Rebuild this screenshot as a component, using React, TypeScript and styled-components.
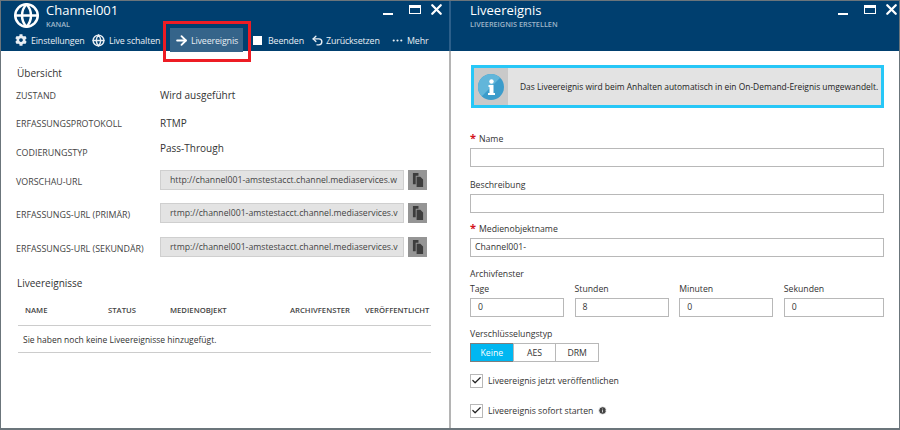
import React from "react";
import styled, { createGlobalStyle } from "styled-components";
import { Globe, ArrowRight, Undo2, MoreHorizontal, X, Check, Info } from "lucide-react";
import { FaCog } from "react-icons/fa";

const Global = createGlobalStyle`
  html, body { margin: 0; padding: 0; background: #fff; }
  body { font-family: "Open Sans", "Liberation Sans", sans-serif; color: #333; }
  * { box-sizing: border-box; }
`;

const Page = styled.div`
  width: 900px;
  height: 430px;
  display: grid;
  grid-template-columns: 450px 448px;
  overflow: hidden;
  position: relative;
  border: 1px solid #6b757b;
  border-bottom-width: 2px;
`;

const Blade = styled.section<{ $left?: boolean }>`
  border-right: ${({ $left }) => ($left ? "2px solid #b4b4b4" : "none")};
  display: flex;
  flex-direction: column;
  min-width: 0;
`;

const Header = styled.header<{ $left?: boolean }>`
  height: 50px;
  background: #003f6f;
  color: #fff;
  position: relative;
  flex: none;
  margin-right: ${({ $left }) => ($left ? "-2px" : "0")};
  border-right: ${({ $left }) => ($left ? "2px solid #2c5f8a" : "none")};
`;

const TitleRow = styled.div<{ $indent: number }>`
  display: flex;
  align-items: flex-start;
  padding: 1px 0 0 ${({ $indent }) => $indent}px;
  height: 26px;
`;

const TitleBlock = styled.div`
  display: flex;
  flex-direction: column;
`;

const Title = styled.div`
  font-size: 13px;
  line-height: 16px;
  color: #fff;
`;

const Subtitle = styled.div`
  font-size: 7.3px;
  line-height: 9px;
  font-weight: 600;
  color: #9fb6c9;
  margin-top: 2px;
`;

const Logo = styled.div`
  position: absolute;
  left: 12px;
  top: 1px;
  color: #fff;
`;

const WindowButtons = styled.div<{ $right: number }>`
  position: absolute;
  top: 0;
  right: ${({ $right }) => $right}px;
  height: 16px;
  display: flex;
  align-items: center;
  color: #fff;
`;

const MinBar = styled.span`
  display: block;
  width: 10px;
  height: 2px;
  background: #fff;
  margin: 9px 16px 0 0;
`;

const MaxBox = styled.span`
  display: block;
  width: 12px;
  height: 9px;
  border: 1.5px solid #fff;
  border-top-width: 3px;
  margin-right: 10px;
`;

const Toolbar = styled.nav`
  display: flex;
  align-items: center;
  height: 24px;
  margin-top: 1px;
  padding-left: 14px;
`;

const Tool = styled.div<{ $active?: boolean; $w: number; $pad?: number; $gap?: number }>`
  display: flex;
  align-items: center;
  gap: ${({ $gap }) => $gap ?? 4}px;
  width: ${({ $w }) => $w}px;
  height: 24px;
  font-size: 8.9px;
  letter-spacing: -0.15px;
  color: #e8eef3;
  white-space: nowrap;
  flex: none;
  padding-left: ${({ $pad }) => $pad ?? 0}px;
  background: ${({ $active }) => ($active ? "#35648a" : "transparent")};
  svg {
    flex: none;
  }
`;

const StopIcon = styled.span`
  display: block;
  width: 9px;
  height: 9px;
  background: #fff;
  margin-right: 2px;
  flex: none;
`;

const RedBox = styled.div`
  position: absolute;
  left: 162px;
  top: 20px;
  width: 88px;
  height: 41px;
  border: 3px solid #ed1c24;
  pointer-events: none;
`;

const LeftBody = styled.div`
  padding: 15px 19px 0 15px;
`;

const SectionTitle = styled.h2<{ $top?: number }>`
  font-size: 10px;
  line-height: 14px;
  font-weight: 400;
  margin: ${({ $top }) => $top ?? 0}px 0 0 1px;
  color: #333;
`;

const PropRow = styled.div<{ $h: number }>`
  display: grid;
  grid-template-columns: 144px 1fr;
  align-items: center;
  height: ${({ $h }) => $h}px;
`;

const PropLabel = styled.div<{ $drop?: number }>`
  font-size: 8.9px;
  padding-top: ${({ $drop }) => $drop ?? 0}px;
  color: #444;
  white-space: nowrap;
`;

const PropValue = styled.div<{ $lift?: number }>`
  font-size: 10px;
  padding-bottom: ${({ $lift }) => $lift ?? 0}px;
  color: #333;
`;

const UrlRow = styled.div`
  display: flex;
  align-items: flex-start;
  gap: 4px;
  align-self: start;
  padding-top: 7px;
`;

const UrlBox = styled.div`
  width: 244px;
  height: 20px;
  background: #e3e3e3;
  border: 1px solid #cfcfcf;
  font-size: 8.7px;
  line-height: 18px;
  padding-left: 9px;
  color: #444;
  white-space: nowrap;
`;

const CopyButton = styled.div`
  width: 19px;
  height: 20px;
  background: #959595;
  display: flex;
  align-items: center;
  justify-content: center;
`;

const Table = styled.div`
  margin-top: 10px;
  width: 413px;
  margin-left: 2px;
`;

const TableHead = styled.div`
  display: flex;
  height: 26px;
  align-items: flex-start;
  padding-top: 4px;
  border-bottom: 1px solid #cccccc;
  font-size: 7.7px;
  line-height: 12px;
  font-weight: 600;
  color: #444;
`;

const HeadCell = styled.div<{ $w: number }>`
  width: ${({ $w }) => $w}px;
  flex: none;
  white-space: nowrap;
`;

const EmptyRow = styled.div`
  height: 27px;
  display: flex;
  align-items: center;
  padding-left: 5px;
  border-bottom: 1px solid #cccccc;
  font-size: 8.5px;
  color: #333;
`;

const RightBody = styled.div`
  padding: 14px 15px 0 19px;
`;

const InfoBanner = styled.div`
  display: flex;
  align-items: stretch;
  height: 43px;
  width: 413px;
  margin-left: 1px;
  border: 3px solid #27c7f7;
  background: #e3e3e3;
`;

const InfoIconCell = styled.div`
  width: 34px;
  background: #c9c9c9;
  display: flex;
  align-items: center;
  justify-content: center;
`;

const InfoText = styled.div`
  display: flex;
  align-items: center;
  padding-left: 12px;
  font-size: 8.41px;
  color: #222;
  white-space: nowrap;
`;

const Field = styled.div<{ $top: number }>`
  margin-top: ${({ $top }) => $top}px;
`;

const Label = styled.label`
  display: block;
  font-size: 8.7px;
  line-height: 12px;
  height: 15px;
  color: #333;
  white-space: nowrap;
`;

const Req = styled.span`
  color: #d3141c;
  font-weight: 700;
  font-size: 11px;
  line-height: 10px;
  margin-right: 3px;
`;

const TextInput = styled.div`
  width: 414px;
  height: 19px;
  border: 1px solid #b8b8b8;
  background: #fff;
  font-size: 8.7px;
  line-height: 17px;
  padding-left: 4px;
  color: #333;
`;

const TimeGrid = styled.div`
  display: grid;
  grid-template-columns: 94px 94px 94px 100px;
  column-gap: 10.6px;
  width: 414px;
`;

const TimeInput = styled(TextInput)`
  width: 100%;
  padding-left: 7px;
`;

const Segments = styled.div`
  display: flex;
  width: 129px;
  height: 19px;
`;

const Segment = styled.div<{ $on?: boolean }>`
  flex: 1;
  margin-left: ${({ $on }) => ($on ? "0" : "-1px")};
  display: flex;
  align-items: center;
  justify-content: center;
  font-size: 8.7px;
  color: ${({ $on }) => ($on ? "#fff" : "#333")};
  background: ${({ $on }) => ($on ? "#00b7f1" : "#fff")};
  border: 1px solid ${({ $on }) => ($on ? "#7d7d7d" : "#b8b8b8")};
`;

const CheckRow = styled.div<{ $top: number }>`
  display: flex;
  align-items: center;
  gap: 5px;
  margin-top: ${({ $top }) => $top}px;
  height: 15px;
  font-size: 8.7px;
  color: #333;
`;

const CheckBox = styled.span`
  width: 13px;
  height: 14px;
  border: 1px solid #b8b8b8;
  display: flex;
  align-items: center;
  justify-content: center;
  color: #222;
  flex: none;
`;

const CopyIcon = () => (
  <svg width="12" height="14" viewBox="0 0 13 15">
    <path d="M1 0h6v3H4v9H1z" fill="#3d3d3d" />
    <path d="M5 4h4l3 3v8H5z" fill="#3d3d3d" />
  </svg>
);

const InfoBall = () => (
  <svg width="26" height="26" viewBox="0 0 26 26">
    <circle cx="13" cy="13" r="13" fill="#3c9ccb" />
    <path d="M13 0a13 13 0 0 0-13 13 13 13 0 0 0 3.8 9.2L22.2 3.8A13 13 0 0 0 13 0z" fill="#62b6da" />
    <circle cx="13.5" cy="7.5" r="2.2" fill="#fff" />
    <path d="M10.5 11h5v8h1.5v2h-7v-2h1.5v-6h-1z" fill="#fff" />
  </svg>
);

const WindowControls: React.FC<{ right: number }> = ({ right }) => (
  <WindowButtons $right={right}>
    <MinBar />
    <MaxBox />
    <X size={17} strokeWidth={3.2} style={{ margin: "0 -3px" }} />
  </WindowButtons>
);

const base = "channel001-amstestacct.channel.mediaservices";
const urls = [
  { label: "VORSCHAU-URL", url: `http://${base}.w`, h: 33 },
  { label: "ERFASSUNGS-URL (PRIMÄR)", url: `rtmp://${base}.v`, h: 34 },
  { label: "ERFASSUNGS-URL (SEKUNDÄR)", url: `rtmp://${base}.v`, h: 33 },
];

const App: React.FC = () => {
  return (
    <Page>
      <Global />
      <Blade $left>
        <Header $left>
          <Logo>
            <Globe size={27} strokeWidth={2.2} />
          </Logo>
          <TitleRow $indent={45}>
            <TitleBlock>
              <Title>Channel001</Title>
              <Subtitle>KANAL</Subtitle>
            </TitleBlock>
          </TitleRow>
          <WindowControls right={7} />
          <Toolbar>
            <Tool $w={77}>
              <FaCog size={12} />
              Einstellungen
            </Tool>
            <Tool $w={78}>
              <Globe size={13} strokeWidth={2.6} />
              Live schalten
            </Tool>
            <Tool $active $w={73} $pad={4} $gap={2}>
              <ArrowRight size={15} strokeWidth={3} color="#fff" />
              Liveereignis
            </Tool>
            <Tool $w={68} $pad={10}>
              <StopIcon />
              Beenden
            </Tool>
            <Tool $w={80} $gap={2}>
              <Undo2 size={13} strokeWidth={2.6} />
              Zurücksetzen
            </Tool>
            <Tool $w={44} $gap={3}>
              <MoreHorizontal size={13} />
              Mehr
            </Tool>
          </Toolbar>
          <RedBox />
        </Header>
        <LeftBody>
          <SectionTitle>Übersicht</SectionTitle>
          <PropRow $h={30}>
            <PropLabel>ZUSTAND</PropLabel>
            <PropValue>Wird ausgeführt</PropValue>
          </PropRow>
          <PropRow $h={26}>
            <PropLabel>ERFASSUNGSPROTOKOLL</PropLabel>
            <PropValue>RTMP</PropValue>
          </PropRow>
          <PropRow $h={27}>
            <PropLabel $drop={6}>CODIERUNGSTYP</PropLabel>
            <PropValue $lift={3}>Pass-Through</PropValue>
          </PropRow>
          {urls.map(({ label, url, h }) => (
            <PropRow $h={h} key={label}>
              <PropLabel $drop={3}>{label}</PropLabel>
              <UrlRow>
                <UrlBox>{url}</UrlBox>
                <CopyButton>
                  <CopyIcon />
                </CopyButton>
              </UrlRow>
            </PropRow>
          ))}
          <SectionTitle $top={13}>Liveereignisse</SectionTitle>
          <Table>
            <TableHead>
              <HeadCell $w={7} />
              <HeadCell $w={83}>NAME</HeadCell>
              <HeadCell $w={62}>STATUS</HeadCell>
              <HeadCell $w={120}>MEDIENOBJEKT</HeadCell>
              <HeadCell $w={75}>ARCHIVFENSTER</HeadCell>
              <HeadCell $w={65}>VERÖFFENTLICHT</HeadCell>
            </TableHead>
            <EmptyRow>Sie haben noch keine Liveereignisse hinzugefügt.</EmptyRow>
          </Table>
        </LeftBody>
      </Blade>
      <Blade>
        <Header>
          <TitleRow $indent={19}>
            <TitleBlock>
              <Title>Liveereignis</Title>
              <Subtitle>LIVEEREIGNIS ERSTELLEN</Subtitle>
            </TitleBlock>
          </TitleRow>
          <WindowControls right={2} />
        </Header>
        <RightBody>
          <InfoBanner>
            <InfoIconCell>
              <InfoBall />
            </InfoIconCell>
            <InfoText>Das Liveereignis wird beim Anhalten automatisch in ein On-Demand-Ereignis umgewandelt.</InfoText>
          </InfoBanner>
          <Field $top={25}>
            <Label>
              <Req>*</Req>Name
            </Label>
            <TextInput />
          </Field>
          <Field $top={12}>
            <Label>Beschreibung</Label>
            <TextInput />
          </Field>
          <Field $top={10}>
            <Label>
              <Req>*</Req>Medienobjektname
            </Label>
            <TextInput>Channel001-</TextInput>
          </Field>
          <Field $top={11}>
            <Label>Archivfenster</Label>
            <TimeGrid>
              {[
                ["Tage", "0"],
                ["Stunden", "8"],
                ["Minuten", "0"],
                ["Sekunden", "0"],
              ].map(([name, value]) => (
                <div key={name}>
                  <Label>{name}</Label>
                  <TimeInput>{value}</TimeInput>
                </div>
              ))}
            </TimeGrid>
          </Field>
          <Field $top={11}>
            <Label>Verschlüsselungstyp</Label>
            <Segments>
              <Segment $on>Keine</Segment>
              <Segment>AES</Segment>
              <Segment>DRM</Segment>
            </Segments>
          </Field>
          <CheckRow $top={11}>
            <CheckBox>
              <Check size={11} strokeWidth={2.6} />
            </CheckBox>
            Liveereignis jetzt veröffentlichen
          </CheckRow>
          <CheckRow $top={15}>
            <CheckBox>
              <Check size={11} strokeWidth={2.6} />
            </CheckBox>
            Liveereignis sofort starten
            <Info size={9} fill="#444" color="#fff" />
          </CheckRow>
        </RightBody>
      </Blade>
    </Page>
  );
};

export default App;
